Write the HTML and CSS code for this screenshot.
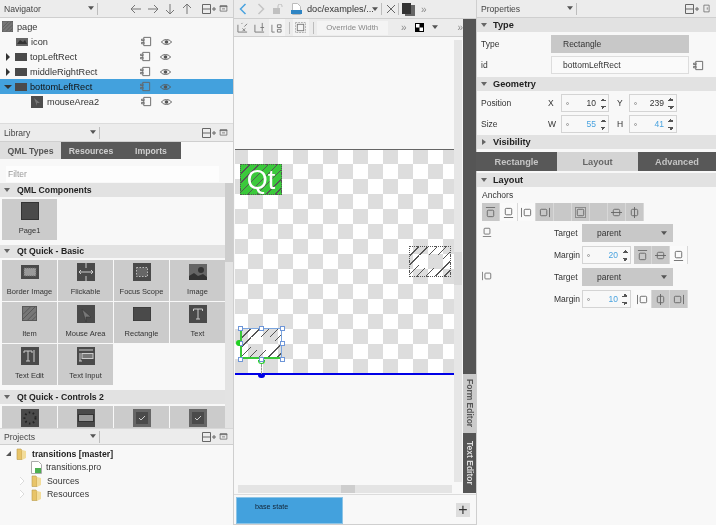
FILE: index.html
```html
<!DOCTYPE html>
<html lang="en">
<head>
<meta charset="utf-8">
<title>Qt Quick Designer</title>
<link rel="stylesheet" href="styles.css">
</head>
<body>
<svg class="defs" width="0" height="0" aria-hidden="true">
  <symbol id="split" viewBox="0 0 16 12"><path d="M1.5 1.5h8v9h-8zM1.5 6h8M11 6h4M13 4v4" fill="none" stroke="#666"/></symbol>
  <symbol id="close" viewBox="0 0 12 12"><path d="M1.5 2.500h9v7h-9zM1.5 2.500h9v1h-9zM4 6.500h4" fill="none" stroke="#666"/></symbol>
  <symbol id="alias" viewBox="0 0 12 12"><path d="M3 1.5h7.500v9H3v-2M3 3.500v-2M.5 3.500h3V5h-3zM.5 7h3v1.500h-3zM3 5v2" fill="none" stroke="#666"/></symbol>
  <symbol id="eye" viewBox="0 0 12 8"><path d="M.5 4C3 .5 9 .5 11.500 4 9 7.500 3 7.500.5 4z" fill="none" stroke="#555"/><circle cx="6" cy="4" r="2" fill="#555"/></symbol>
  <symbol id="rect" viewBox="0 0 18 18"><rect x="0.500" y="0.500" width="17" height="17" fill="#4a4a4a" stroke="#333"/></symbol>
  <symbol id="item" viewBox="0 0 16 16"><rect x="0.500" y="0.500" width="15" height="15" fill="#777" stroke="#555"/><path d="M1 9l8-8M1 14L14 1M6 15l9-9M11 15l4-4" stroke="#555"/></symbol>
  <symbol id="arrowd" viewBox="0 0 8 6"><path d="M0 0h8L4 5z" fill="#555"/></symbol>
  <symbol id="folder" viewBox="0 0 12 13"><path d="M1 2h4l1 1.500v9H1z" fill="#e8c468" stroke="#b89a4a" stroke-width=".6"/><path d="M6 3l4 1v7l-4 2z" fill="#f2dc9a"/></symbol>
  <symbol id="a-top" viewBox="0 0 12 12"><path d="M1 .5h10" stroke="#666"/><rect x="2.500" y="3.500" width="7" height="7" rx="1" fill="none" stroke="#666"/></symbol>
  <symbol id="a-bottom" viewBox="0 0 12 12"><path d="M1 11.500h10" stroke="#666"/><rect x="2.500" y="1.500" width="7" height="7" rx="1" fill="none" stroke="#666"/></symbol>
  <symbol id="a-left" viewBox="0 0 12 12"><path d="M.5 1v10" stroke="#666"/><rect x="3.500" y="2.500" width="7" height="7" rx="1" fill="none" stroke="#666"/></symbol>
  <symbol id="a-right" viewBox="0 0 12 12"><path d="M11.500 1v10" stroke="#666"/><rect x="1.500" y="2.500" width="7" height="7" rx="1" fill="none" stroke="#666"/></symbol>
  <symbol id="a-fill" viewBox="0 0 12 12"><rect x="2.500" y="2.500" width="7" height="7" rx="1" fill="none" stroke="#666"/><rect x=".5" y=".5" width="11" height="11" fill="none" stroke="#888"/></symbol>
  <symbol id="a-vc" viewBox="0 0 12 12"><path d="M0 6h12" stroke="#666"/><rect x="2.500" y="2.500" width="7" height="7" rx="1.500" fill="none" stroke="#666"/></symbol>
  <symbol id="a-hc" viewBox="0 0 12 12"><path d="M6 0v12" stroke="#666"/><rect x="2.500" y="2.500" width="7" height="7" rx="1.500" fill="none" stroke="#666"/></symbol>
</svg>

<div class="app">
  <aside class="left">
    <div class="dock-head">
      <span class="dock-title">Navigator</span><svg class="caret"><use href="#arrowd"/></svg><i class="sep"></i>
      <span class="nav-arrows">
        <svg viewBox="0 0 12 12"><path d="M11 6H1M5 2L1 6l4 4" fill="none" stroke="#777"/></svg>
        <svg viewBox="0 0 12 12"><path d="M1 6h10M7 2l4 4-4 4" fill="none" stroke="#777"/></svg>
        <svg viewBox="0 0 12 12"><path d="M6 1v10M2 7l4 4 4-4" fill="none" stroke="#777"/></svg>
        <svg viewBox="0 0 12 12"><path d="M6 11V1M2 5l4-4 4 4" fill="none" stroke="#777"/></svg>
      </span>
      <svg class="hbtn"><use href="#split"/></svg><svg class="hbtn small"><use href="#close"/></svg>
    </div>
    <div class="nav-tree">
      <div class="nrow"><svg class="nico l0"><use href="#item"/></svg><span>page</span></div>
      <div class="nrow"><span class="ind1"></span><svg class="nico" viewBox="0 0 12 8"><rect width="12" height="8" fill="#666"/><path d="M1 6l3-4 3 2 2-2 2 4z" fill="#333"/></svg><span class="nm">icon</span><svg class="al"><use href="#alias"/></svg><svg class="ey"><use href="#eye"/></svg></div>
      <div class="nrow"><b class="tri-r"></b><svg class="nico wide" viewBox="0 0 12 8"><rect width="12" height="8" fill="#4a4a4a"/></svg><span class="nm">topLeftRect</span><svg class="al"><use href="#alias"/></svg><svg class="ey"><use href="#eye"/></svg></div>
      <div class="nrow"><b class="tri-r"></b><svg class="nico wide" viewBox="0 0 12 8"><rect width="12" height="8" fill="#4a4a4a"/></svg><span class="nm">middleRightRect</span><svg class="al"><use href="#alias"/></svg><svg class="ey"><use href="#eye"/></svg></div>
      <div class="nrow sel"><b class="tri-d"></b><svg class="nico wide" viewBox="0 0 12 8"><rect width="12" height="8" fill="#4a4a4a"/></svg><span class="nm">bottomLeftRect</span><svg class="al"><use href="#alias"/></svg><svg class="ey"><use href="#eye"/></svg></div>
      <div class="nrow"><span class="ind2"></span><svg class="nico mouse" viewBox="0 0 12 12"><rect width="12" height="12" fill="#4d4d4d"/><path d="M3 2l6 5H6v3z" fill="#777"/></svg><span class="nm n2">mouseArea2</span><svg class="al"><use href="#alias"/></svg><svg class="ey"><use href="#eye"/></svg></div>
    </div>

    <div class="dock-head lib-head">
      <span class="dock-title">Library</span><svg class="caret"><use href="#arrowd"/></svg><i class="sep"></i><span class="grow"></span>
      <svg class="hbtn"><use href="#split"/></svg><svg class="hbtn small"><use href="#close"/></svg>
    </div>
    <div class="lib-tabs"><span class="ltab on">QML Types</span><span class="ltab">Resources</span><span class="ltab">Imports</span></div>
    <div class="library">
      <div class="lib-scroll">
        <div class="filter">Filter</div>
        <div class="sect"><b class="stri"></b>QML Components</div>
        <div class="tiles">
          <div class="tile"><svg><use href="#rect"/></svg><span>Page1</span></div>
        </div>
        <div class="sect"><b class="stri"></b>Qt Quick - Basic</div>
        <div class="tiles">
          <div class="tile"><svg viewBox="0 0 18 14" class="ic14"><rect width="18" height="14" fill="#4a4a4a"/><rect x="3" y="3" width="12" height="8" fill="#999" stroke="#666" stroke-dasharray="1 1"/></svg><span>Border Image</span></div>
          <div class="tile"><svg viewBox="0 0 18 18"><rect width="18" height="18" fill="#4a4a4a"/><path d="M9 0v5M9 13v5M2 9h14M2 9l2-2M2 9l2 2M16 9l-2-2M16 9l-2 2" stroke="#ccc" fill="none"/></svg><span>Flickable</span></div>
          <div class="tile"><svg viewBox="0 0 18 18"><rect width="18" height="18" fill="#4a4a4a"/><rect x="3.500" y="4.500" width="11" height="9" fill="#666" stroke="#bbb" stroke-dasharray="1.500 1.500"/></svg><span>Focus Scope</span></div>
          <div class="tile"><svg viewBox="0 0 18 16" class="ic16"><rect width="18" height="16" fill="#666"/><path d="M0 16l0-4 5-3 4 3 5-2 4 3v3z" fill="#333"/><circle cx="12" cy="6" r="3" fill="#333"/></svg><span>Image</span></div>
          <div class="tile"><svg class="ic15"><use href="#item"/></svg><span>Item</span></div>
          <div class="tile"><svg viewBox="0 0 18 18"><rect width="18" height="18" fill="#4a4a4a"/><path d="M5 4l9 8H9v5z" fill="#777" stroke="#333" stroke-width=".5"/></svg><span>Mouse Area</span></div>
          <div class="tile"><svg viewBox="0 0 18 14" class="ic14"><rect width="18" height="14" fill="#4a4a4a" stroke="#333"/></svg><span>Rectangle</span></div>
          <div class="tile"><svg viewBox="0 0 18 18"><rect width="18" height="18" fill="#4a4a4a"/><path d="M4.500 6V4h9v2M9 4v10M7 14h4" stroke="#ccc" fill="none"/></svg><span>Text</span></div>
          <div class="tile"><svg viewBox="0 0 18 18"><rect width="18" height="18" fill="#4a4a4a"/><path d="M3 6V4h8v2M7 4v10M5 14h4M13 3v12" stroke="#ccc" fill="none"/></svg><span>Text Edit</span></div>
          <div class="tile"><svg viewBox="0 0 18 18"><rect width="18" height="18" fill="#4a4a4a"/><path d="M2 3h14" stroke="#ccc"/><rect x="5" y="6.500" width="11" height="5" fill="#777" stroke="#ccc"/><path d="M3 6v8M2 14h3" stroke="#ccc"/></svg><span>Text Input</span></div>
        </div>
        <div class="sect"><b class="stri"></b>Qt Quick - Controls 2</div>
        <div class="tiles">
          <div class="tile"><svg viewBox="0 0 18 18"><rect width="18" height="18" fill="#4a4a4a"/><circle cx="9" cy="9" r="5.500" fill="none" stroke="#222" stroke-width="2" stroke-dasharray="1.500 2.500"/></svg></div>
          <div class="tile"><svg viewBox="0 0 18 18"><rect width="18" height="18" fill="#4a4a4a"/><rect x="1.500" y="5.500" width="15" height="7" fill="#999" stroke="#333"/></svg></div>
          <div class="tile"><svg viewBox="0 0 18 18"><rect width="18" height="18" fill="#666"/><rect x="3" y="3" width="12" height="12" fill="#4a4a4a"/><path d="M6 9l2 2 4-4" stroke="#ccc" fill="none"/></svg></div>
          <div class="tile"><svg viewBox="0 0 18 18"><rect width="18" height="18" fill="#666"/><rect x="3" y="3" width="12" height="12" fill="#4a4a4a"/><path d="M6 9l2 2 4-4" stroke="#ccc" fill="none"/></svg></div>
        </div>
      </div>
      <div class="lib-vbar"><i></i></div>
    </div>

    <div class="dock-head proj-head">
      <span class="dock-title">Projects</span><svg class="caret"><use href="#arrowd"/></svg><i class="sep"></i><span class="grow"></span>
      <svg class="hbtn"><use href="#split"/></svg><svg class="hbtn small"><use href="#close"/></svg>
    </div>
    <div class="proj-tree">
      <div class="prow bold"><b class="tri-open"></b><svg class="pf"><use href="#folder"/></svg><span>transitions [master]</span></div>
      <div class="prow p1"><svg class="pfile" viewBox="0 0 11 13"><path d="M.5.5h7l3 3v9H.5z" fill="#fff" stroke="#aaa"/><rect x="4" y="7" width="6" height="5" fill="#4caf50"/></svg><span>transitions.pro</span></div>
      <div class="prow p2"><b class="tri-closed"></b><svg class="pf"><use href="#folder"/></svg><span>Sources</span></div>
      <div class="prow p2"><b class="tri-closed"></b><svg class="pf"><use href="#folder"/></svg><span>Resources</span></div>
    </div>
  </aside>

  <main class="center">
    <div class="tool1">
      <svg class="t-nav" viewBox="0 0 8 12"><path d="M6.500 1L1.500 6l5 5" fill="none" stroke="#4aa3df" stroke-width="1.500"/></svg>
      <svg class="t-nav next" viewBox="0 0 8 12"><path d="M1.500 1l5 5-5 5" fill="none" stroke="#c4c4c4" stroke-width="1.500"/></svg>
      <svg class="t-lock" viewBox="0 0 11 11"><rect x="0" y="4" width="7" height="6" fill="#c0c0c0"/><path d="M5 4V2a2 2 0 0 1 4 0v1" fill="none" stroke="#c0c0c0"/></svg>
      <svg class="t-doc" viewBox="0 0 11 12"><path d="M1.500.5h5l3 3v8h-8z" fill="#fff" stroke="#bbb"/><rect x="0" y="7" width="11" height="4" fill="#2f85c4"/></svg>
      <span class="path">doc/examples/...</span>
      <svg class="t-caret"><use href="#arrowd"/></svg><i class="sep"></i>
      <svg class="t-x" viewBox="0 0 10 10"><path d="M1 1l8 8M9 1L1 9" stroke="#666"/></svg><i class="sep"></i>
      <svg class="t-stack" viewBox="0 0 13 13"><rect x="3" y="2" width="10" height="11" fill="#666"/><rect y="0" width="9" height="11" fill="#333"/></svg>
      <span class="more">»</span>
    </div>
    <div class="work">
      <div class="work-main">
        <div class="tool2">
          <span class="t2btn"><svg viewBox="0 0 12 12"><path d="M1 11V3M1 11h10M5 2l1-1M8 5l3-3" fill="none" stroke="#777"/><path d="M6 7l3 3M9 7l-3 3" stroke="#777"/></svg></span>
          <span class="t2btn"><svg viewBox="0 0 12 12"><path d="M1 11V3M1 11h10M9 1v9M7 6h4" fill="none" stroke="#777"/></svg></span>
          <span class="t2btn on"><svg viewBox="0 0 12 12"><path d="M1 11V3M1 11h3M7 3h4v3H7zM7 8h4v3H7z" fill="none" stroke="#777"/></svg></span>
          <i class="sep"></i>
          <span class="t2btn on"><svg viewBox="0 0 12 12"><rect x="2.500" y="2.500" width="7" height="7" fill="none" stroke="#777"/><rect x=".5" y=".5" width="11" height="11" fill="none" stroke="#aaa" stroke-dasharray="2 1"/></svg></span>
          <i class="sep"></i>
          <span class="override">Override Width</span>
          <span class="more m2">»</span>
          <svg class="swatch" viewBox="0 0 9 9"><rect width="9" height="9" fill="#000"/><rect x="1" y="1" width="3.500" height="3.500" fill="#fff"/><rect x="4.500" y="4.500" width="3.500" height="3.500" fill="#fff"/></svg>
          <svg class="t-caret c2"><use href="#arrowd"/></svg>
          <span class="more m3">»</span>
        </div>
        <div class="canvas">
          <div class="board">
            <div class="hatch green"><span>Qt</span></div>
            <div class="hatch mid"><i></i></div>
            <div class="hatch sel-rect"><i></i></div>
            <b class="h h1"></b><b class="h h2"></b><b class="h h3"></b><b class="h h4"></b><b class="h h5"></b><b class="h h6"></b><b class="h h7"></b><b class="h h8"></b>
            <b class="dot-left"></b><b class="dot-bot"></b><b class="dash"></b><b class="dot-blue"></b>
          </div>
          <div class="vbar"><i></i></div>
          <div class="hbar"><i></i></div>
        </div>
      </div>
      <div class="side">
        <span class="side-fill"></span>
        <span class="side-tab form">Form Editor</span>
        <span class="side-tab text">Text Editor</span>
      </div>
    </div>
    <div class="states">
      <div class="state"><span>base state</span></div>
      <span class="plus">+</span>
    </div>
  </main>

  <aside class="right">
    <div class="dock-head">
      <span class="dock-title">Properties</span><svg class="caret"><use href="#arrowd"/></svg><i class="sep"></i><span class="grow"></span>
      <svg class="hbtn"><use href="#split"/></svg><svg class="hbtn small" viewBox="0 0 12 12"><path d="M2.500 1.500h7v9h-7zM7 4.500v3" fill="none" stroke="#666"/></svg>
    </div>
    <div class="sect r"><b class="stri"></b>Type</div>
    <div class="prop-row"><span class="lbl">Type</span><span class="field dark">Rectangle</span></div>
    <div class="prop-row"><span class="lbl">id</span><span class="field">bottomLeftRect</span><svg class="al id-al"><use href="#alias"/></svg></div>
    <div class="sect r g"><b class="stri"></b>Geometry</div>
    <div class="geo">
      <span class="lbl">Position</span><span class="ax">X</span>
      <span class="spin"><u></u><em>10</em><s></s></span><span class="ax ay">Y</span>
      <span class="spin"><u></u><em>239</em><s></s></span>
    </div>
    <div class="geo">
      <span class="lbl">Size</span><span class="ax">W</span>
      <span class="spin blue"><u></u><em>55</em><s></s></span><span class="ax ay">H</span>
      <span class="spin blue"><u></u><em>41</em><s></s></span>
    </div>
    <div class="sect r v"><b class="stri closed"></b>Visibility</div>
    <div class="ptabs"><span>Rectangle</span><span class="on">Layout</span><span>Advanced</span></div>
    <div class="sect r l"><b class="stri"></b>Layout</div>
    <div class="anchors-label">Anchors</div>
    <div class="anchors">
      <span><svg><use href="#a-top"/></svg></span>
      <span class="on"><svg><use href="#a-bottom"/></svg></span>
      <span class="on"><svg><use href="#a-left"/></svg></span>
      <span><svg><use href="#a-right"/></svg></span>
      <span></span>
      <span><svg><use href="#a-fill"/></svg></span>
      <span></span>
      <span><svg><use href="#a-vc"/></svg></span>
      <span><svg><use href="#a-hc"/></svg></span>
    </div>
    <div class="anchor-row t1"><svg class="a-ind"><use href="#a-bottom"/></svg><span class="tlbl">Target</span><span class="select">parent<svg class="t-caret"><use href="#arrowd"/></svg></span></div>
    <div class="anchor-row"><span class="tlbl">Margin</span><span class="spin blue s2"><u></u><em>20</em><s></s></span>
      <span class="seg"><span><svg><use href="#a-top"/></svg></span><span><svg><use href="#a-vc"/></svg></span><span class="on"><svg><use href="#a-bottom"/></svg></span></span></div>
    <div class="anchor-row"><svg class="a-ind"><use href="#a-left"/></svg><span class="tlbl">Target</span><span class="select">parent<svg class="t-caret"><use href="#arrowd"/></svg></span></div>
    <div class="anchor-row"><span class="tlbl">Margin</span><span class="spin blue s2"><u></u><em>10</em><s></s></span>
      <span class="seg"><span class="on"><svg><use href="#a-left"/></svg></span><span><svg><use href="#a-hc"/></svg></span><span><svg><use href="#a-right"/></svg></span></span></div>
  </aside>
</div>
</body>
</html>
```

FILE: styles.css
```css
* { box-sizing: border-box; }
html, body { margin: 0; height: 100%; }
body { font: 9.2px "Liberation Sans", Arial, sans-serif; color: #333; background: #f8f8f8; overflow: hidden; }
.defs { position: absolute; }
svg { display: block; flex: none; }
.app { display: flex; width: 716px; height: 525px; filter: blur(.3px); }

.left { width: 234px; display: flex; flex-direction: column; border-right: 1px solid #cfcfcf; background: #f8f8f8; }
.center { width: 242px; display: flex; flex-direction: column; background: #f8f8f8; }
.right { width: 240px; display: flex; flex-direction: column; background: #f8f8f8; border-left: 1px solid #cfcfcf; font-size: 8.500px; }

.dock-head { height: 18px; flex: none; display: flex; align-items: center; background: #ececec; border-bottom: 1px solid #cfcfcf; padding-left: 4px; color: #444; font-size: 8.600px; }
.dock-title { width: 86px; }
.caret { width: 6px; height: 5px; margin-right: 3px; }
.sep { width: 1px; height: 12px; background: #bdbdbd; flex: none; }
.grow { flex: 1; }
.nav-arrows { display: flex; gap: 5px; margin-left: 32px; margin-right: 8px; }
.nav-arrows svg { width: 12px; height: 12px; }
.hbtn { width: 16px; height: 12px; margin-right: 2px; }
.hbtn.small { width: 9px; height: 9px; margin-right: 5px; }

.nav-tree { height: 105px; background: #f8f8f8; flex: none; padding-top: 1px; }
.nrow { height: 15px; display: flex; align-items: center; position: relative; }
.nrow.sel { background: #43a1dd; color: #111; }
.nico { width: 12px; height: 8px; }
.nico.l0 { width: 11px; height: 11px; margin-left: 2px; margin-right: 4px; }
.ind1 { width: 16px; flex: none; }
.ind2 { width: 31px; flex: none; }
.nico.wide { margin-left: 5px; }
.nico.mouse { height: 12px; }
.nm { margin-left: 3px; width: 110px; }
.n2 { width: 94px; margin-left: 4px; }
.tri-r { width: 0; height: 0; margin-left: 6px; border-left: 4px solid #333; border-top: 4px solid transparent; border-bottom: 4px solid transparent; }
.tri-d { width: 0; height: 0; margin-left: 4px; border-top: 4px solid #333; border-left: 4px solid transparent; border-right: 4px solid transparent; }
.tri-d + .nico.wide { margin-left: 3px; }
.al { width: 11px; height: 11px; margin-right: 9px; }
.ey { width: 11px; height: 8px; }

.lib-head { border-top: 1px solid #dcdcdc; height: 19px; }
.lib-tabs { height: 17px; flex: none; display: flex; background: #f8f8f8; font-weight: bold; font-size: 8.700px; }
.ltab { width: 60px; background: #595959; color: #cfcfcf; display: flex; align-items: center; justify-content: center; }
.ltab.on { width: 61px; background: #dedede; color: #555; }
.library { height: 269px; flex: none; display: flex; overflow: hidden; }
.lib-scroll { width: 225px; flex: none; overflow: hidden; padding-top: 7px; }
.lib-vbar { width: 8px; flex: none; margin-top: 24px; background: #e3e3e3; }
.lib-vbar i { display: block; height: 79px; background: #cdcdcd; }
.filter { height: 16px; margin: 0 6px 1px; background: #fdfdfd; color: #999; padding: 3px 2px; font-size: 8.500px; }
.sect { height: 13.500px; flex: none; display: flex; align-items: center; background: #e2e2e2; font-weight: bold; font-size: 8.700px; color: #222; padding-left: 4px; }
.stri { width: 0; height: 0; margin-right: 7px; border-top: 4px solid #666; border-left: 3px solid transparent; border-right: 3px solid transparent; }
.stri.closed { border-left: 4px solid #666; border-top: 3px solid transparent; border-bottom: 3px solid transparent; border-right: 0; margin-left: 1px; }
.tiles { display: grid; grid-template-columns: repeat(4, 55px); gap: 1px; padding: 2px 2px 4px; margin-bottom: 1px; }
.tile { height: 41px; background: #cbcbcb; display: flex; flex-direction: column; align-items: center; font-size: 7.500px; color: #333; padding-top: 3px; position: relative; }
.tile svg { width: 18px; height: 18px; margin-bottom: 6px; }
.tile svg.ic14 { height: 14px; margin: 2px 0 8px; }
.tile svg.ic16 { height: 16px; margin: 1px 0 7px; }
.tile svg.ic15 { width: 15px; height: 15px; margin: 1px 0 8px; }
.tile span { white-space: nowrap; }

.proj-head { height: 17px; border-top: 1px solid #d8d8d8; }
.proj-tree { flex: 1; padding-top: 2px; }
.prow { height: 13.500px; display: flex; align-items: center; font-size: 8.800px; color: #333; }
.prow.bold { font-weight: bold; color: #222; font-size: 8.700px; }
.tri-open { width: 0; height: 0; margin: 0 5px 0 6px; border-bottom: 5px solid #555; border-left: 5px solid transparent; }
.tri-closed { width: 0; height: 0; margin: 0 7px 0 20px; border-left: 4px solid #fff; border-top: 4px solid transparent; border-bottom: 4px solid transparent; filter: drop-shadow(0 0 .5px #777); }
.pf { width: 12px; height: 13px; margin-right: 4px; }
.p1 { padding-left: 31px; }
.pfile { width: 11px; height: 13px; margin-right: 4px; }

.tool1 { height: 19px; flex: none; display: flex; align-items: center; background: #ececec; border-bottom: 1px solid #cfcfcf; padding-left: 5px; }
.t-nav { width: 8px; height: 12px; margin-right: 10px; }
.t-nav.next { margin-right: 8px; }
.t-lock { width: 11px; height: 11px; margin-right: 7px; }
.t-doc { width: 11px; height: 12px; margin-right: 5px; }
.path { width: 65px; white-space: nowrap; color: #333; }
.t-caret { width: 6px; height: 5px; margin-right: 3px; }
.t-x { width: 10px; height: 10px; margin: 0 2px 0 4px; }
.t-stack { width: 13px; height: 13px; margin-left: 3px; }
.more { margin-left: 6px; color: #888; font-size: 10px; }

.work { flex: 1; display: flex; min-height: 0; border-bottom: 1px solid #dcdcdc; }
.work-main { width: 229px; display: flex; flex-direction: column; flex: none; }
.tool2 { height: 18px; flex: none; display: flex; align-items: center; background: #ececec; border-bottom: 1px solid #cfcfcf; padding-left: 1px; }
.t2btn { width: 16px; height: 17px; margin-right: 1px; display: flex; align-items: center; justify-content: center; }
.t2btn.on { background: #f4f4f4; }
.t2btn svg { width: 11px; height: 11px; }
.tool2 .sep { margin: 0 3px 0 3px; }
.override { width: 72px; height: 14px; background: #f4f4f4; color: #888; font-size: 7.800px; display: flex; align-items: center; justify-content: center; }
.m2 { margin-left: 13px; }
.swatch { width: 9px; height: 9px; margin-left: 9px; }
.c2 { margin: 0 0 0 8px; }
.m3 { margin-left: 19px; }

.canvas { flex: 1; position: relative; background: #f8f8f8; }
.board { position: absolute; left: 1px; top: 112px; width: 219px; height: 226px; border-top: 1px solid #666; border-bottom: 2px solid #0000e6;
  background: repeating-conic-gradient(#ddd 0 25%, #fff 0 50%) -17px -1px / 30px 30px; }
.vbar { position: absolute; left: 220px; top: 3px; width: 8px; height: 442px; background: #e6e6e6; }
.vbar i { display: block; margin-top: 212px; height: 33px; background: #d9d9d9; }
.hbar { position: absolute; left: 4px; top: 448px; width: 214px; height: 8px; background: #e4e4e4; }
.hbar i { display: block; margin-left: 103px; width: 14px; height: 8px; background: #cecece; }
.hatch { position: absolute; width: 42px; height: 31px; border: 1px dotted #555; background: repeating-linear-gradient(135deg, transparent 0 5.500px, #555 5.500px 6.500px); }
.hatch i { position: absolute; left: 9px; top: 8px; width: 24px; height: 13px; background-image: repeating-conic-gradient(#ddd 0 25%, #fff 0 50%); background-size: 30px 30px; }
.hatch.mid i { background-position: -201px -106px; }
.hatch.sel-rect i { background-position: -33px -188px; }
.hatch.green { left: 5px; top: 14px; background-color: #3bc93b; color: #fff; font: 27px/30px "Liberation Sans", sans-serif; text-align: center; overflow: hidden; }
.hatch.mid { left: 174px; top: 96px; }
.hatch.sel-rect { left: 5px; top: 178px; border: 1px solid #7ba6e0; border-left: 2px solid #38c838; border-bottom: 2px solid #38c838; }
.h { position: absolute; width: 5px; height: 5px; background: #fff; border: 1px solid #6e96d8; }
.h1 { left: 3px; top: 176px; } .h2 { left: 24px; top: 176px; } .h3 { left: 45px; top: 176px; }
.h4 { left: 3px; top: 191px; } .h5 { left: 45px; top: 191px; }
.h6 { left: 3px; top: 207px; } .h7 { left: 24px; top: 207px; } .h8 { left: 45px; top: 207px; }
.dot-left { position: absolute; left: 1px; top: 190px; width: 4px; height: 6px; background: #22d022; border-radius: 3px 0 0 3px; }
.dot-bot { position: absolute; left: 23px; top: 210px; width: 7px; height: 4px; border: 1px solid #22d022; border-top: 0; border-radius: 0 0 4px 4px; }
.dash { position: absolute; left: 26px; top: 214px; height: 10px; border-left: 1px dashed #999; }
.dot-blue { position: absolute; left: 23px; bottom: -5px; width: 7px; height: 3.500px; background: #0000e6; border-radius: 0 0 4px 4px; }

.side { width: 13px; flex: none; display: flex; flex-direction: column; background: #f4f4f4; }
.side-fill { height: 355px; background: #555; }
.side-tab { writing-mode: vertical-rl; font-weight: bold; font-size: 8.500px; display: flex; align-items: center; justify-content: center; }
.side-tab.form { height: 59px; background: #cbcbcb; color: #555; }
.side-tab.text { height: 60px; background: #555; color: #ddd; }
.states { height: 30px; flex: none; display: flex; align-items: center; padding: 1px 6px 0 2px; justify-content: space-between; border-bottom: 1px solid #cfcfcf; }
.state { width: 107px; height: 27px; background: #43a1dd; border: 1px solid #8cc4e6; font-size: 7.200px; color: #123; padding: 4px 0 0 18px; }
.plus { width: 14px; height: 14px; background: #ddd; font-size: 16px; line-height: 13px; text-align: center; color: #333; }

.sect.r { font-size: 9.200px; height: 14px; }
.sect.r .stri { margin-right: 6px; }
.sect.r .stri.closed { margin-right: 7px; }
.sect.r.g { margin-top: 3px; }
.sect.r.v { margin-top: 2px; }
.sect.r.l { margin-top: 2px; }
.prop-row { height: 18px; margin-top: 3px; display: flex; align-items: center; flex: none; }
.lbl { width: 72px; padding-left: 4px; flex: none; color: #333; }
.prop-row .lbl { width: 74px; }
.field { width: 138px; height: 18px; background: #fafafa; border: 1px solid #ddd; display: flex; align-items: center; padding-left: 11px; color: #333; }
.field.dark { background: #c8c8c8; border-color: #c8c8c8; }
.id-al { margin: 0 0 0 4px; }
.geo { display: flex; align-items: center; height: 18px; margin-top: 3px; flex: none; }
.ax { width: 14px; flex: none; margin-left: -1px; margin-right: -1px; }
.ay { width: 13px; margin-left: 8px; }
.spin { width: 48px; height: 18px; border: 1px solid #d4d4d4; background: #f8f8f8; display: flex; align-items: center; position: relative; flex: none; }
.spin u { width: 3px; height: 3px; border: 1px solid #999; border-radius: 50%; margin-left: 4px; }
.spin em { font-style: normal; margin-left: auto; margin-right: 12px; color: #333; }
.spin.blue em { color: #4aa3df; }
.spin s { position: absolute; right: 2px; top: 3px; width: 6px; height: 11px;
  background: linear-gradient(135deg, transparent 50%, #555 50%) 0 0 / 3px 3px no-repeat,
              linear-gradient(225deg, transparent 50%, #555 50%) 3px 0 / 3px 3px no-repeat,
              linear-gradient(45deg, transparent 50%, #555 50%) 0 8px / 3px 3px no-repeat,
              linear-gradient(315deg, transparent 50%, #555 50%) 3px 8px / 3px 3px no-repeat; }
.ptabs { display: flex; height: 19px; margin: 3px 0 0 -1px; flex: none; font-weight: bold; font-size: 9.200px; }
.ptabs span { width: 81px; display: flex; align-items: center; justify-content: center; background: #585858; color: #c4c4c4; }
.ptabs span:last-child { width: 78px; }
.ptabs span.on { background: #d4d4d4; color: #666; }
.anchors-label { margin: 2px 0 0 5px; height: 13px; line-height: 13px; flex: none; }
.anchors { display: flex; margin: 1px 0 0 5px; width: 162px; height: 18px; background: #c8c8c8; flex: none; }
.anchors span { width: 18px; height: 18px; display: flex; align-items: center; justify-content: center; border-right: 1px solid #d8d8d8; }
.anchors span.on { background: #fafafa; }
.anchors svg, .seg svg { width: 11px; height: 11px; }
.anchor-row { position: relative; display: flex; align-items: center; height: 18px; padding-left: 77px; margin-top: 4px; flex: none; }
.anchor-row.t1 { margin-top: 3px; }
.a-ind { position: absolute; left: 5px; top: 3px; width: 10px; height: 10px; }
.tlbl { width: 28px; flex: none; }
.select { width: 91px; height: 18px; background: #c8c8c8; display: flex; align-items: center; justify-content: space-between; padding: 0 3px 0 15px; }
.spin.s2 { width: 49px; }
.seg { display: flex; margin-left: 3px; height: 18px; background: #c8c8c8; }
.seg span { width: 18px; display: flex; align-items: center; justify-content: center; border-right: 1px solid #d8d8d8; }
.seg span.on { background: #fafafa; }
```
